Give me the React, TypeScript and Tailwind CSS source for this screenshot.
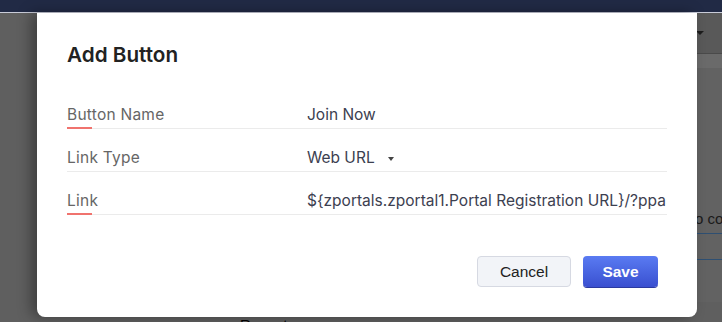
import React from 'react';

const rows = [
  { label: 'Button Name', value: 'Join Now', required: true },
  { label: 'Link Type', value: 'Web URL', select: true },
  { label: 'Link', value: '${zportals.zportal1.Portal Registration URL}/?ppa=join&source=portal', required: true },
];

export default function App() {
  return (
    <div className="relative w-[722px] h-[322px] overflow-hidden bg-[#5f5f5f] font-['Inter',sans-serif]">
      {/* Page behind the overlay */}
      <div className="h-[12px] bg-[#212a45]" />
      <div className="h-px bg-[#c9ccd9]" />
      <div className="flex justify-end">
        <div className="w-[25px] flex flex-col">
          <div className="h-[40px] bg-[#595959] flex items-center">
            <span className="border-x-[4px] border-x-transparent border-t-[4px] border-t-[#1c1c1c] -ml-[1px]" />
          </div>
          <div className="h-px bg-[#4a4a4a]" />
          <div className="h-[14px] bg-[#6a6a6a]" />
          <div className="h-[165px] bg-[#626262] flex items-end pb-[3px]">
            <span className="text-[15px] text-[#1a1a1a] font-['Liberation_Sans',sans-serif] whitespace-nowrap -ml-[2px]">o co</span>
          </div>
          <div className="h-[26px] bg-[#626262] border-t border-[#2e4f72]" />
          <div className="h-[43px] bg-[#626262] border-t border-[#2e4f72]" />
        </div>
      </div>
      <div className="absolute left-[240px] top-[314px] text-[15px] text-black font-['Liberation_Sans',sans-serif]">Recent</div>

      {/* Modal */}
      <div className="absolute left-[37px] top-[13px] w-[660px] h-[304px] bg-white rounded-b-[8px] shadow-[-6px_0_14px_rgba(0,0,0,0.35)] pl-[30px] pr-[30px] pt-[28px] flex flex-col">
        <h2 className="text-[20.7px] leading-[28px] font-semibold text-[#222]">Add Button</h2>
        <div className="mt-[17px] flex flex-col">
          {rows.map((r) => (
            <div key={r.label} className="relative h-[43px] flex items-end pb-[3px] border-b border-[#ebebeb]">
              <div className="w-[240px] text-[15.5px] tracking-[0.25px] leading-[20px] text-[#666]">{r.label}</div>
              <div className="flex-1 min-w-0 flex items-center text-[15.5px] leading-[20px] text-[#3c4050]">
                <span className="whitespace-nowrap overflow-hidden">{r.value}</span>
                {r.select && (
                  <span className="ml-[13px] mt-[1px] border-x-[3.5px] border-x-transparent border-t-[4px] border-t-[#444]" />
                )}
              </div>
              {r.required && <span className="absolute left-0 -bottom-px w-[25px] h-[2px] bg-[#f0736e]" />}
            </div>
          ))}
        </div>
        <div className="mt-auto mb-[30px] flex justify-end gap-[12px] pr-[9px] font-['Liberation_Sans',sans-serif] text-[15.5px]">
          <button className="w-[94px] h-[31px] rounded-[4px] bg-[#f2f4f8] border border-[#d6d9e2] text-[#222]">Cancel</button>
          <button className="w-[75px] h-[31px] rounded-[4px] bg-gradient-to-b from-[#5a7bf2] to-[#3a4fd0] shadow-[0_1px_0_#2b3aa0] text-white font-bold">Save</button>
        </div>
      </div>
    </div>
  );
}
